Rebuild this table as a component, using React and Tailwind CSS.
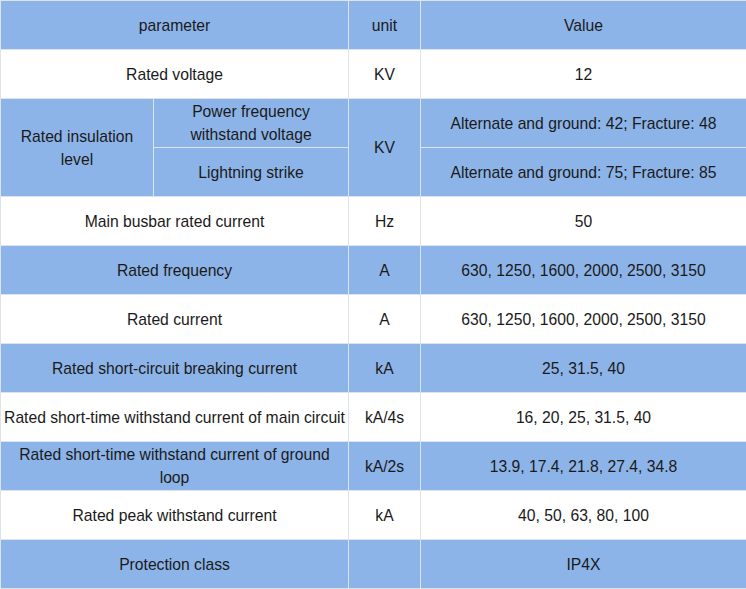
export default function App() {
  const B = "bg-[#8db4e8]";
  const W = "bg-white";
  const td = "border border-[#dde3ea] text-center align-middle p-0 leading-[23px]";
  const rest = [
    [W, "Main busbar rated current", "Hz", "50", ""],
    [B, "Rated frequency", "A", "630, 1250, 1600, 2000, 2500, 3150", ""],
    [W, "Rated current", "A", "630, 1250, 1600, 2000, 2500, 3150", ""],
    [B, "Rated short-circuit breaking current", "kA", "25, 31.5, 40", ""],
    [W, "Rated short-time withstand current of main circuit", "kA/4s", "16, 20, 25, 31.5, 40", ""],
    [B, "Rated short-time withstand current of ground loop", "kA/2s", "13.9, 17.4, 21.8, 27.4, 34.8", "px-[12px]"],
    [W, "Rated peak withstand current", "kA", "40, 50, 63, 80, 100", ""],
    [B, "Protection class", "", "IP4X", ""],
  ];
  return (
    <div className="w-[746px] h-[589px] bg-white" style={{ fontFamily: '"Liberation Sans", Arial, sans-serif' }}>
      <table className="w-[746px] border-collapse table-fixed text-[15.7px] text-[#1a1a1a]">
        <colgroup>
          <col className="w-[153px]" />
          <col className="w-[195px]" />
          <col className="w-[72px]" />
          <col className="w-[326px]" />
        </colgroup>
        <tbody>
          <tr className="h-[49px]">
            <td colSpan={2} className={`${td} ${B}`}>parameter</td>
            <td className={`${td} ${B}`}>unit</td>
            <td className={`${td} ${B}`}>Value</td>
          </tr>
          <tr className="h-[49px]">
            <td colSpan={2} className={`${td} ${W}`}>Rated voltage</td>
            <td className={`${td} ${W}`}>KV</td>
            <td className={`${td} ${W}`}>12</td>
          </tr>
          <tr className="h-[49px]">
            <td rowSpan={2} className={`${td} ${B} px-2`}>Rated insulation level</td>
            <td className={`${td} ${B} px-6`}>Power frequency withstand voltage</td>
            <td rowSpan={2} className={`${td} ${B}`}>KV</td>
            <td className={`${td} ${B}`}>Alternate and ground: 42; Fracture: 48</td>
          </tr>
          <tr className="h-[49px]">
            <td className={`${td} ${B}`}>Lightning strike</td>
            <td className={`${td} ${B}`}>Alternate and ground: 75; Fracture: 85</td>
          </tr>
          {rest.map((r, i) => (
            <tr key={i} className="h-[49px]">
              <td colSpan={2} className={`${td} ${r[0]} ${r[4]}`}>{r[1]}</td>
              <td className={`${td} ${r[0]}`}>{r[2]}</td>
              <td className={`${td} ${r[0]}`}>{r[3]}</td>
            </tr>
          ))}
        </tbody>
      </table>
    </div>
  );
}
